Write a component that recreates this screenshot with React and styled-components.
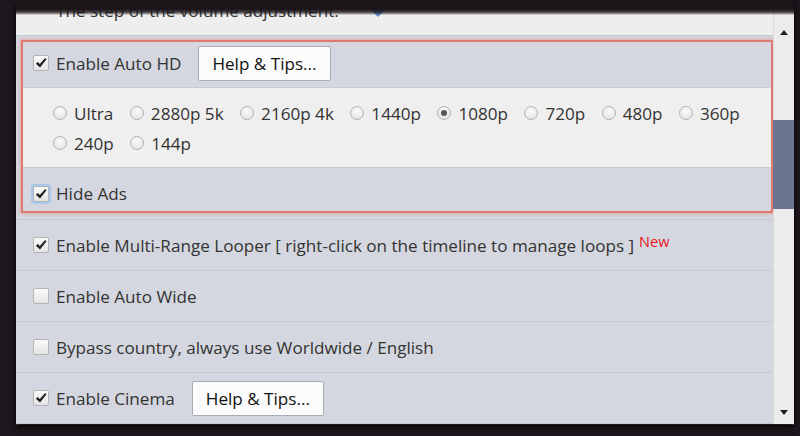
import React from 'react'
import styled, { createGlobalStyle } from 'styled-components'

const GlobalStyle = createGlobalStyle`
  * { box-sizing: border-box; }
  html, body { margin: 0; padding: 0; }
  body {
    background: #161115;
    font-family: "Open Sans", "DejaVu Sans", sans-serif;
  }
`

const Page = styled.div`
  width: 800px;
  height: 436px;
  overflow: hidden;
  padding: 0 6px 0 16px;
  background: repeating-conic-gradient(#271e25 0 25%, #140f13 0 50%) 0 0 / 2px 2px;
`

const Window = styled.div`
  position: relative;
  width: 778px;
  height: 424px;
  display: flex;
  background: #d4d7df;
  box-shadow: 0 3px 5px rgba(0, 0, 0, 0.9), 0 1px 0 #6a6a6a;

  &::before {
    content: "";
    position: absolute;
    top: 0;
    left: 0;
    right: 0;
    height: 15px;
    z-index: 2;
    background: linear-gradient(
      to bottom,
      #1b1519 0px,
      #1b1519 9px,
      rgba(27, 21, 25, 0.8) 12px,
      rgba(27, 21, 25, 0.35) 14px,
      rgba(27, 21, 25, 0) 15px
    );
  }
`

const Content = styled.div`
  flex: 1;
  min-width: 0;
  overflow: hidden;
`

const List = styled.div`
  margin-top: -15px;
`

const Row = styled.div`
  display: flex;
  align-items: center;
  height: 51px;
  padding-left: 17px;
  background: ${p => (p.$light ? '#eeeeee' : '#d4d7df')};
  border-bottom: 1px solid #c6c9d1;
`

const Group = styled.div`
  padding: 4px 0 6px 5px;
  background: #d4d7df;
  border-bottom: 1px solid #c6c9d1;
`

const Highlight = styled.div`
  border: 2px solid #df7a70;
  box-shadow: 0 0 3px 1px rgba(230, 120, 110, 0.45);
`

const GroupHead = styled.div`
  display: flex;
  align-items: center;
  height: ${p => p.$h}px;
  padding: ${p => p.$pad};
  background: #d4d7df;
`

const Radios = styled.div`
  display: flex;
  flex-wrap: wrap;
  row-gap: 4px;
  column-gap: 16.5px;
  padding: 12px 0 11px 30px;
  background: #efefef;
  border-top: 1px solid #c8cbd3;
  border-bottom: 1px solid #c8cbd3;
`

const RadioItem = styled.label`
  display: flex;
  align-items: center;
  gap: 7px;
  height: 26px;
  font-size: 17.1px;
  color: #333;
`

const RadioDot = styled.span`
  width: 14px;
  height: 14px;
  border-radius: 50%;
  border: 1px solid #b4b4b4;
  background: radial-gradient(circle at 50% 35%, #fbfbfb, #dedede);
  display: flex;
  align-items: center;
  justify-content: center;

  &::after {
    content: "";
    width: 6px;
    height: 6px;
    border-radius: 50%;
    background: ${p => (p.$on ? '#555' : 'transparent')};
  }
`

const Box = styled.span`
  width: 16px;
  height: 16px;
  flex: none;
  border: 1px solid #b5b5b5;
  border-radius: 2px;
  background: linear-gradient(#fafafa, #e4e4e4);
  display: flex;
  align-items: center;
  justify-content: center;
  margin-right: 7px;
  box-shadow: ${p => (p.$focus ? '0 0 0 2px #a9c8ee' : 'none')};
`

const Label = styled.span`
  font-size: 17.1px;
  color: #333;
  white-space: nowrap;
`

const NewTag = styled.span`
  font-size: 14.5px;
  color: #e8141b;
  margin-left: 5px;
  position: relative;
  top: -4px;
`

const Button = styled.button`
  height: 35px;
  margin-left: 17px;
  padding: 0 13px;
  border: 1px solid #a9adb9;
  border-radius: 2px;
  background: #fbfbfb;
  font-family: inherit;
  font-size: 17.1px;
  color: #111;
`

const Diamond = styled.svg`
  margin-left: 32px;
  flex: none;
`

const Scrollbar = styled.div`
  width: 21px;
  flex: none;
  display: flex;
  flex-direction: column;
  align-items: center;
  padding: 30px 0 9px;
  background: #ececec;
  border-left: 1px solid #dadada;
`

const Arrow = styled.span`
  width: 0;
  height: 0;
  border-left: 4px solid transparent;
  border-right: 4px solid transparent;
  ${p =>
    p.$down
      ? 'border-top: 5px solid #222;'
      : 'border-bottom: 5px solid #222;'}
`

const Thumb = styled.div`
  align-self: stretch;
  margin: 85px 0 0 -1px;
  height: 89px;
  background: #6b7591;
`

const Spacer = styled.div`
  flex: 1;
`

function Check({ on, focus }) {
  return (
    <Box $focus={focus}>
      {on && (
        <svg width="12" height="12" viewBox="0 0 11 11">
          <path d="M0.8 6.1 L2.6 4.5 L4.4 6.5 L9.3 0.9 L10.6 2.1 L4.6 9.6 Z" fill="#222" />
        </svg>
      )}
    </Box>
  )
}

const qualities = ['Ultra', '2880p 5k', '2160p 4k', '1440p', '1080p', '720p', '480p', '360p', '240p', '144p']

export default function App() {
  return (
    <>
      <GlobalStyle />
      <Page>
        <Window>
          <Content>
            <List>
              <Row $light>
                <Label style={{ marginLeft: 23 }}>The step of the volume adjustment:</Label>
                <Diamond width="14" height="14" viewBox="0 0 14 14">
                  <path d="M7 0 L14 7 L7 14 L0 7 Z" fill="#5b8fd0" />
                </Diamond>
              </Row>

              <Group>
                <Highlight>
                  <GroupHead $h={45} $pad="0 0 3px 10px">
                    <Check on />
                    <Label>Enable Auto HD</Label>
                    <Button>Help &amp; Tips...</Button>
                  </GroupHead>
                  <Radios>
                    {qualities.map(q => (
                      <RadioItem key={q}>
                        <RadioDot $on={q === '1080p'} />
                        {q}
                      </RadioItem>
                    ))}
                  </Radios>
                  <GroupHead $h={43} $pad="8px 0 0 10px">
                    <Check on focus />
                    <Label>Hide Ads</Label>
                  </GroupHead>
                </Highlight>
              </Group>

              <Row>
                <Check on />
                <Label>Enable Multi-Range Looper [ right-click on the timeline to manage loops ]</Label>
                <NewTag>New</NewTag>
              </Row>
              <Row>
                <Check />
                <Label>Enable Auto Wide</Label>
              </Row>
              <Row>
                <Check />
                <Label>Bypass country, always use Worldwide / English</Label>
              </Row>
              <Row>
                <Check on />
                <Label>Enable Cinema</Label>
                <Button>Help &amp; Tips...</Button>
              </Row>
            </List>
          </Content>
          <Scrollbar>
            <Arrow />
            <Thumb />
            <Spacer />
            <Arrow $down />
          </Scrollbar>
        </Window>
      </Page>
    </>
  )
}
